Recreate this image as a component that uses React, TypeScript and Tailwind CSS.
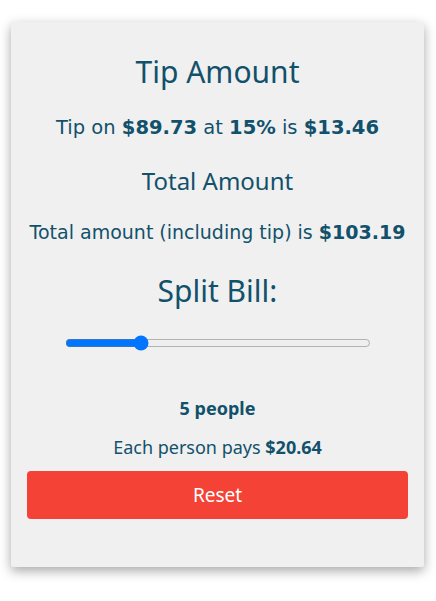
import { useState } from 'react'

export default function App() {
  const [people, setPeople] = useState(5)
  const bill = 89.73
  const tip = 13.46
  const total = 103.19
  const each = (total / people).toFixed(2)

  return (
    <div className="min-h-screen bg-white pt-[22px] pl-[11px] pr-[12px] font-['Noto_Sans',sans-serif]">
      <div className="bg-[#f0f0f0] rounded-[2px] shadow-[0_4px_12px_rgba(0,0,0,0.35)] px-4 pt-[26px] pb-[48px] text-center text-[#12516b]">
        <h1 className="text-[30px] leading-[48px] mb-[19px]">Tip Amount</h1>
        <p className="text-[19.5px] leading-[26px] font-['DejaVu_Sans',sans-serif]">
          Tip on <b>${bill}</b> at <b>15%</b> is <b>${tip.toFixed(2)}</b>
        </p>
        <h2 className="text-[24px] leading-[32px] mt-[24px]">Total Amount</h2>
        <p className="text-[19px] leading-[26px] mt-[22px] font-['DejaVu_Sans',sans-serif]">
          Total amount (including tip) is <b>${total.toFixed(2)}</b>
        </p>
        <h2 className="text-[30px] leading-[40px] mt-[26px]">Split Bill:</h2>
        <div className="flex justify-center mt-[24px]">
          <input
            type="range"
            min={1}
            max={18}
            value={people}
            onChange={e => setPeople(Number(e.target.value))}
            className="w-[306px] accent-[#0075ff]"
          />
        </div>
        <p className="text-[18px] font-bold leading-[26px] mt-[44px]">{people} people</p>
        <p className="text-[18px] leading-[26px] mt-[13px]">
          Each person pays <b>${each}</b>
        </p>
        <button
          onClick={() => setPeople(5)}
          className="w-full h-[48px] mt-[11px] bg-[#f44336] text-white text-[19px] rounded-[4px]"
        >
          Reset
        </button>
      </div>
    </div>
  )
}
